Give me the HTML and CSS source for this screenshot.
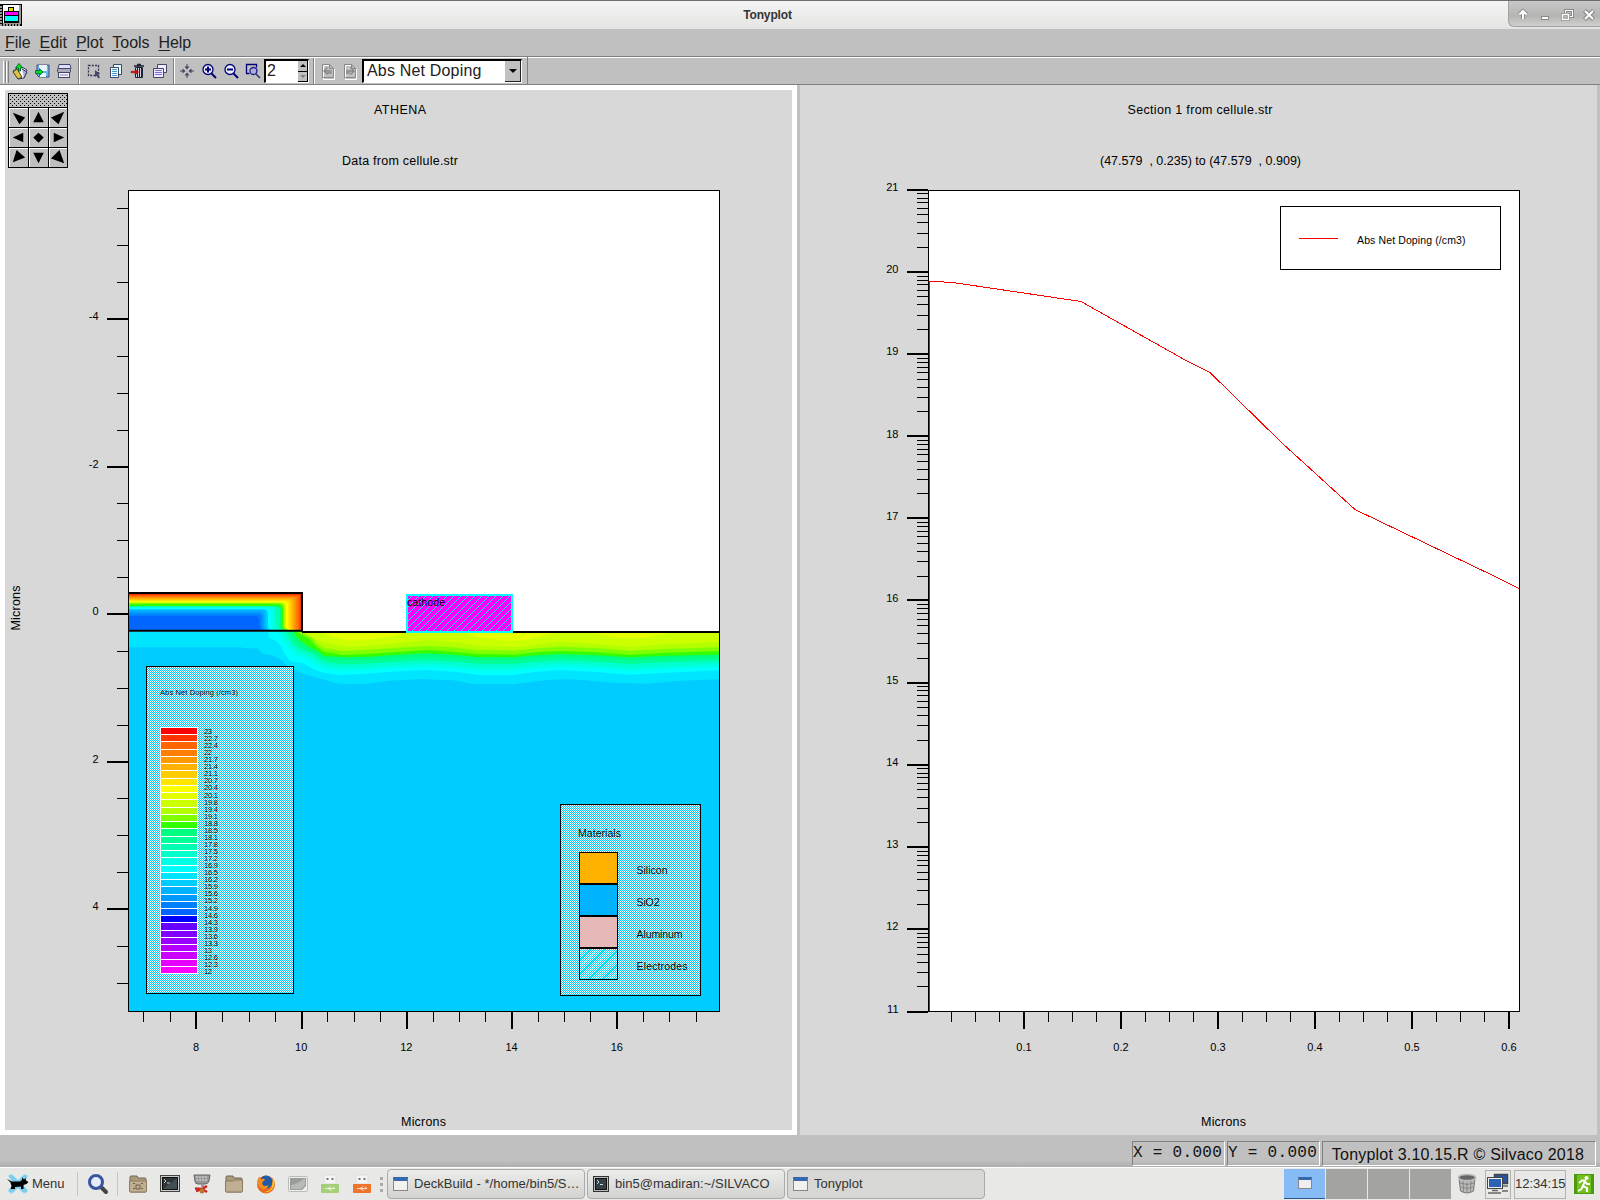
FILE: index.html
```html
<!DOCTYPE html>
<html lang="en">
<head>
<meta charset="utf-8">
<title>Tonyplot</title>
<link rel="stylesheet" href="styles.css">
</head>
<body>
<div class="desktop">
  <header class="titlebar">
    <svg class="app-icon" width="22" height="22" shape-rendering="crispEdges"><rect width="22" height="22" fill="#999"/><path d="M0 .5H21.500V22M2.500 0V20" stroke="#000" fill="none"/><path d="M1 1V21" stroke="#000" stroke-width="2" stroke-dasharray="1 2"/><path d="M2 21H21" stroke="#000" stroke-width="2" stroke-dasharray="1 2"/><rect x="3" y="1" width="16" height="18" fill="#fff"/><rect x="8" y="3" width="6" height="5" fill="#000"/><rect x="9" y="4" width="4" height="4" fill="#dd0"/><rect x="4" y="7" width="15" height="12" fill="#000"/><rect x="5" y="8" width="13" height="3" fill="#f0f"/><rect x="5" y="12" width="13" height="5" fill="#0ff"/></svg>
    <h1 class="window-title">Tonyplot</h1>
    <div class="window-controls">
      <svg width="92" height="26"><g fill="none" stroke="#8b8b8b" stroke-width="4"><path d="M14 19V12M10.500 14.500L14 11L17.500 14.500"/><path d="M75.500 10.500L84.500 19.500M84.500 10.500L75.500 19.500" stroke-width="4.500"/></g><g fill="none" stroke="#fff" stroke-width="2"><path d="M14 19V12M10.500 14.500L14 11L17.500 14.500"/><path d="M76 11L84 19M84 11L76 19"/></g><rect x="32.500" y="16.500" width="7" height="3" fill="#fff" stroke="#888"/><rect x="56.500" y="10.500" width="7" height="6" fill="#bbb" stroke="#888" stroke-width="3"/><rect x="56.500" y="10.500" width="7" height="6" fill="none" stroke="#fff"/><rect x="53.500" y="14.500" width="6" height="5" fill="#bbb" stroke="#888" stroke-width="3"/><rect x="53.500" y="14.500" width="6" height="5" fill="none" stroke="#fff" stroke-width="1.500"/></svg>
    </div>
  </header>

  <nav class="menubar">
    <span><u>F</u>ile</span><span><u>E</u>dit</span><span><u>P</u>lot</span><span><u>T</u>ools</span><span><u>H</u>elp</span>
  </nav>

  <div class="toolbar">
    <i class="grip"></i>
    <div class="tools">
      <svg viewBox="0 0 22 22"><path d="M4 11l7-5 7 4-3 8-6 1z" fill="#fff" stroke="#335"/><path d="M4 12l4-3 5 8-4 2z" fill="#e2c23d" stroke="#443"/><path d="M13 9l5 3-3 6" fill="#aac" stroke="#335"/><path d="M9.500 11V8H6.500L10 3.500 13.500 8H11.500V11z" fill="#0e1" stroke="#063"/></svg>
      <svg viewBox="0 0 22 22"><path d="M6 5h12v12H8l-2-2z" fill="#6cb4ec" stroke="#447"/><path d="M8 5h8v6H8z" fill="#e8f6ff"/><path d="M9 13h6v4H9z" fill="#dff"/><path d="M4.500 10.500h4V8.500l3.500 3.500-3.500 3.500v-2h-4z" fill="#0d2" stroke="#054" stroke-width=".8"/></svg>
      <svg viewBox="0 0 22 22"><path d="M6 4.500h11l1 4H5z" fill="#ddf" stroke="#446"/><rect x="4.500" y="8.500" width="13" height="4" rx="1" fill="#aab" stroke="#446"/><rect x="5.500" y="12.500" width="11" height="5" fill="#eef" stroke="#446"/><path d="M7 15h8" stroke="#88a"/></svg>
    </div>
    <i class="sep"></i>
    <div class="tools">
      <svg viewBox="0 0 22 22"><rect x="5.500" y="5.500" width="10" height="10" fill="none" stroke="#335" stroke-width="1.300" stroke-dasharray="2 1.300"/><path d="M12 10l5 4-2 .5 2 3-1.500 1-2-3-1.500 1.500z" fill="#446"/></svg>
      <svg viewBox="0 0 22 22"><path d="M8.500 4.500h8v10h-8z" fill="#dff" stroke="#446"/><path d="M5.500 7.500h8v10h-8z" fill="#eff" stroke="#446"/><path d="M7 9.500h5M7 11.500h5M7 13.500h5M7 15.500h5" stroke="#49c"/></svg>
      <svg viewBox="0 0 22 22"><path d="M8.500 7.500h7v10h-7z" fill="#ccd" stroke="#223"/><path d="M10.500 8v9M12.500 8v9M14.500 8v9" stroke="#223"/><path d="M7 6h10M10 4.500h4" stroke="#223" stroke-width="1.500"/><path d="M4 11.300h4V9l3.500 3L8 15V12.700H4z" fill="#e00" stroke="#711" stroke-width=".5"/></svg>
      <svg viewBox="0 0 22 22"><path d="M8.500 4.500h9v8h-9z" fill="#eef" stroke="#446"/><path d="M4.500 8.500h10v9h-10z" fill="#eef" stroke="#446"/><path d="M6 10.500h7M6 12.500h7M6 14.500h7" stroke="#86d"/></svg>
    </div>
    <i class="sep tight"></i>
    <div class="tools">
      <svg viewBox="0 0 22 22" fill="#446"><path d="M8.500 6.500L11 9.500 13.500 6.500zM8.500 15.500L11 12.500 13.500 15.500zM6.500 8.500L9.500 11 6.500 13.500zM15.500 8.500L12.500 11 15.500 13.500z"/><path d="M10.500 4h1v4h-1zM10.500 14h1v4h-1zM4 10.500h4v1H4zM14 10.500h4v1h-4z"/></svg>
      <svg viewBox="0 0 22 22"><path d="M13.500 13.500l4.500 4.500" stroke="#007" stroke-width="2"/><circle cx="10" cy="9.500" r="5" fill="#eef" stroke="#007" stroke-width="1.300"/><path d="M7 9.500h6M10 6.500v6" stroke="#007" stroke-width="2"/></svg>
      <svg viewBox="0 0 22 22"><path d="M13.500 13.500l4.500 4.500" stroke="#007" stroke-width="2"/><circle cx="10" cy="9.500" r="5" fill="#eef" stroke="#007" stroke-width="1.300"/><path d="M7 9.500h6" stroke="#007" stroke-width="2"/></svg>
      <svg viewBox="0 0 22 22"><path d="M7.500 13.500h-3v-9h10v3" fill="none" stroke="#007" stroke-width="1.300"/><path d="M14 14l4 4" stroke="#336" stroke-width="1.600"/><circle cx="11.500" cy="11" r="3.500" fill="#aad" stroke="#228" stroke-width="1.300"/></svg>
    </div>
    <div class="spinbox"><span>2</span><div class="spin-buttons"><b></b><b class="down"></b></div></div>
    <i class="sep wide"></i>
    <div class="tools">
      <svg viewBox="0 0 22 22"><path d="M5.500 4.500h7l4 4v10h-11z" stroke="#fff" fill="none" transform="translate(1 1)"/><path d="M5.500 4.500h7l4 4v9h-11zM12.500 4.500v4h4" stroke="#888" fill="none"/><path d="M13 11h-6m3.500-3.500L7 11l3.500 3.500M10 13h4V10" stroke="#888" fill="none" stroke-width="1.300"/></svg>
      <svg viewBox="0 0 22 22"><path d="M5.500 4.500h7l4 4v10h-11z" stroke="#fff" fill="none" transform="translate(1 1)"/><path d="M5.500 4.500h7l4 4v9h-11zM12.500 4.500v4h4" stroke="#888" fill="none"/><path d="M7 11h8m-3.500-3.500L15 11l-3.500 3.500M7 13h4" stroke="#888" fill="none" stroke-width="1.300"/></svg>
    </div>
    <div class="combo"><span>Abs Net Doping</span><b></b></div>
    <i class="toolbar-end"></i>
  </div>

  <main class="panes">
    <section class="pane active">
      <svg class="plot" id="structure" viewBox="5 90 787 1040" width="787" height="1040">
        <defs>
          <pattern id="dither" width="2" height="2" patternUnits="userSpaceOnUse"><rect x="1" width="1" height="1" fill="#fff"/><rect y="1" width="1" height="1" fill="#fff"/></pattern>
          <pattern id="hatch" width="7" height="7" patternUnits="userSpaceOnUse"><path d="M-1 8L8 -1M-1 1L1 -1M6 8L8 6" stroke="#0ff" stroke-width="1"/></pattern>
          <clipPath id="below"><path d="M147 214H666V217H2000V1400H147Z"/></clipPath>
        </defs>
        <text x="400" y="113.500" textLength="52" class="title">ATHENA</text>
        <text x="400" y="165" textLength="116" class="title">Data from cellule.str</text>
        <rect x="129" y="191" width="590" height="820" fill="#fff"/>
        <rect x="129" y="632" width="590" height="379" fill="#0cf"/>
        <g transform="translate(80 560) scale(.33333)">
          <g clip-path="url(#below)" id="diffusion">
            <path fill="#00e5ff" d="M147 200V262H480L500 265H532L545 280L575 286L600 296L620 316L642 330L680 345L725 357L770 370L800 373L860 371L930 362L1020 357L1120 361L1180 372L1300 373L1380 362L1440 358L1500 359L1600 368L1700 371L1800 362L1917 358V200Z"/>
            <path fill="#0ff" d="M566 200V232L590 244L604 260L612 280L630 303L670 310L700 328L725 337L775 345L850 342L950 334L1040 330L1130 336L1200 345L1300 345L1370 335L1440 330L1550 336L1650 344L1760 338L1917 331V200Z"/>
            <path fill="#00ffe5" d="M585 200L605 235L622 262L645 285L680 298L710 315L740 327L790 333L850 331L950 324L1040 320L1130 325L1200 333L1300 333L1370 325L1440 320L1550 325L1650 333L1760 327L1917 321V200Z"/>
            <path fill="#00ffcc" d="M600 200L618 235L636 260L655 275L690 290L720 310L745 318L790 323L850 321L950 315L1040 311L1130 316L1200 323L1300 323L1370 315L1440 311L1550 315L1650 323L1760 318L1917 312V200Z"/>
            <path fill="#00ff99" d="M612 200L628 235L644 255L665 270L700 284L725 301L750 309L790 313L850 311L950 305L1040 301L1130 305L1200 312L1300 312L1370 305L1440 301L1550 305L1650 312L1760 307L1917 302V200Z"/>
            <path fill="#00ff80" d="M622 200L638 230L652 250L672 265L705 280L728 294L755 301L850 300L950 295L1040 291L1130 295L1200 301L1300 301L1370 294L1440 291L1550 295L1650 301L1760 297L1917 293V200Z"/>
            <path fill="#3f0" d="M634 200L648 228L662 242L690 262L712 272L732 288L800 292L870 290L930 286L1040 280L1120 284L1190 291L1300 292L1370 286L1440 282L1550 286L1650 292L1760 287L1917 284V200Z"/>
            <path fill="#80ff00" d="M645 200L660 222L690 238L705 255L730 275L790 285L850 283L940 277L1040 270L1120 275L1190 282L1300 284L1370 277L1440 273L1550 277L1650 284L1760 278L1917 274V200Z"/>
            <path fill="#b3ff00" d="M652 200L668 220L695 232L712 252L735 265L790 273L850 270L940 264L1040 258L1120 262L1190 270L1300 272L1370 265L1440 260L1550 264L1650 272L1760 266L1917 262V200Z"/>
            <path fill="#cf0" d="M680 200V222L710 240L750 252L800 261L860 258L950 250L1050 240L1120 247L1200 258L1320 261L1380 253L1440 246L1550 253L1650 261L1760 252L1917 247V200Z"/>
            <path fill="#e5ff00" d="M715 217L760 231L800 242L860 240L930 230L980 217ZM1150 217L1200 233L1290 243L1340 240L1390 227L1430 217ZM1520 217L1620 234L1690 234L1780 217Z"/>
          </g>
          <g id="oxide"></g>
          <path d="M147 99H666V216M147 212H666M666 216H1917" fill="none" stroke="#000" stroke-width="6"/>
          <path d="M981 105H1296V215H981Z" fill="#f0f"/>
        </g>
        <rect x="407" y="595" width="105" height="37" fill="url(#hatch)"/>
        <rect x="407" y="595" width="105" height="37" fill="none" stroke="#0ff" stroke-width="2" shape-rendering="crispEdges"/>
        <text x="407" y="606" textLength="38" class="small">cathode</text>
        <rect x="128.500" y="190.500" width="591" height="821" class="frame"/>

        <g id="doping-legend">
          <rect x="146.500" y="666.500" width="147" height="327" fill="url(#dither)" class="frame-line"/>
          <text x="160" y="695" textLength="78" class="tiny">Abs Net Doping (/cm3)</text>
        </g>
        <g class="materials">
          <rect x="560.500" y="804.500" width="140" height="191" fill="url(#dither)" class="frame-line"/>
          <text x="578" y="837" textLength="43" class="small">Materials</text>
          <g stroke="#000" shape-rendering="crispEdges">
            <rect x="579.500" y="852.500" width="38" height="31" fill="#ffb300"/>
            <rect x="579.500" y="884.500" width="38" height="31" fill="#00b3ff"/>
            <rect x="579.500" y="916.500" width="38" height="31" fill="#e6b8b8"/>
            <rect x="579.500" y="948.500" width="38" height="31" fill="url(#hatch)"/>
          </g>
          <text x="636.500" y="874" textLength="31" class="small">Silicon</text>
          <text x="636.500" y="906" textLength="23" class="small">SiO2</text>
          <text x="636.500" y="938" textLength="46" class="small">Aluminum</text>
          <text x="636.500" y="970" textLength="51" class="small">Electrodes</text>
        </g>
        <text transform="translate(19.500 608) rotate(-90)" textLength="45" class="title">Microns</text>
        <text x="423.500" y="1126" textLength="45" class="title">Microns</text>
      </svg>
      <div class="navpad">
        <svg class="navpad-grip" width="58" height="14" shape-rendering="crispEdges"><defs><pattern id="dots" width="4" height="4" patternUnits="userSpaceOnUse"><rect x="1" y="1" width="1" height="1"/><rect x="3" y="3" width="1" height="1"/></pattern></defs><rect width="58" height="13" fill="url(#dots)"/></svg>
        <div class="navpad-keys">
          <svg viewBox="0 0 20 20"><path d="M4 5L17 10 11 17z"/></svg><svg viewBox="0 0 20 20"><path d="M10 4L15.500 15H4.500z"/></svg><svg viewBox="0 0 20 20"><path d="M16 4L2 10 10 17z"/></svg>
          <svg viewBox="0 0 20 20"><path d="M4 10L15 5V15z"/></svg><svg viewBox="0 0 20 20"><path d="M10 5L15.500 10 10 15.500 4.500 10z"/></svg><svg viewBox="0 0 20 20"><path d="M16 10L5 5V15z"/></svg>
          <svg viewBox="0 0 20 20"><path d="M8 2L17 10 4 15z"/></svg><svg viewBox="0 0 20 20"><path d="M10 16L15.500 5H4.500z"/></svg><svg viewBox="0 0 20 20"><path d="M16 16L11 2 2 11z"/></svg>
        </div>
      </div>
    </section>

    <section class="pane">
      <svg class="plot" id="section" viewBox="800 85 797 1050" width="797" height="1050">
        <text x="1200" y="113.500" textLength="145" class="title">Section 1 from cellule.str</text>
        <text x="1200.500" y="165" textLength="201" class="title" xml:space="preserve">(47.579  , 0.235) to (47.579  , 0.909)</text>
        <rect x="928.500" y="190.500" width="591" height="821" fill="#fff" class="frame-line"/>
        <path d="M929.500 1011V281.500H936L952 282.500 963 284 1081 301.500 1186 360.500 1210 372.500 1282 443 1355 509.500 1495 576.500 1519 588.500" fill="none" stroke="#f00" shape-rendering="crispEdges"/>
        <rect x="1280.500" y="206.500" width="220" height="63" fill="#fff" class="frame-line"/>
        <path d="M1299 238.500H1338" stroke="#f00"/>
        <text x="1357" y="244" textLength="108.500" class="small">Abs Net Doping (/cm3)</text>
        <text x="1223.500" y="1126" textLength="45" class="title">Microns</text>
      </svg>
    </section>
  </main>

  <footer class="statusbar">
    <div class="readout">X = 0.000</div>
    <div class="readout">Y = 0.000</div>
    <div class="version"><span>Tonyplot 3.10.15.R © Silvaco 2018</span></div>
  </footer>

  <div class="taskbar">
    <div class="menu-button">
      <svg width="22" height="22"><path d="M1 3Q3 0 6 2L11 7 16 2Q20 0 21 4L15 11 21 17Q20 21 16 20L11 15 6 20Q2 21 1 17L7 11Z" fill="#7ccdec" stroke="#bfe6f6"/><path d="M0 6L5 8.500H13L15 7V4.500L17 6.500 18.500 5 19 7.500 21.500 9 19.500 11 16.500 12V16H14V13.500L8 14V16H3.500L4.500 13 3.500 9.500z" fill="#000"/></svg>
      <span>Menu</span>
    </div>
    <i class="bar-sep"></i>
    <svg class="search" width="22" height="22"><path d="M13 13L19 19" stroke="#444" stroke-width="4" stroke-linecap="round"/><circle cx="9" cy="9" r="6.500" fill="#e4ecf8" stroke="#3a559f" stroke-width="3"/></svg>
    <i class="bar-sep"></i>
    <div class="launchers">
      <svg viewBox="0 0 20 20"><path d="M2 3q0-1 1-1h6l1 2h7q1 0 1 1v12q0 1-1 1H3q-1 0-1-1z" fill="#ab9a7c" stroke="#77684e"/><path d="M1.500 7h17v10q0 1-1 1h-15q-1 0-1-1z" fill="#bfae91" stroke="#8b7b60"/><path d="M5 9.500h2M13 9.500h2M8 11h4v4H8zM5 14.500h2M13 14.500h2" stroke="#6c5e48" fill="none"/></svg>
      <svg viewBox="0 0 20 20"><rect x=".5" y="1.500" width="19" height="16" fill="#ccc" stroke="#444"/><rect x="2.500" y="3.500" width="15" height="12" fill="#2c3538" stroke="#111"/><path d="M4 5l2 2-2 2M7 9h3" stroke="#bcc" fill="none"/><path d="M3 15L17 4V15z" fill="#526064" opacity=".6"/></svg>
      <svg viewBox="0 0 20 20"><path d="M2 1h16l-1 6q-1 3-4 3H6Q3 10 3 7z" fill="#999" stroke="#666"/><path d="M4 3h12M4 6h12" stroke="#ddd" stroke-dasharray="2 1"/><path d="M9 10h3v3H9z" fill="#999"/><path d="M3 14.500l7 .5 5-3M4 17l6-2 5 3" stroke="#c22" stroke-width="2.500" fill="none"/><circle cx="10" cy="17" r="2.500" fill="#b87a2c"/></svg>
      <svg viewBox="0 0 20 20"><path d="M2 3q0-1 1-1h6l1 2h7q1 0 1 1v12q0 1-1 1H3q-1 0-1-1z" fill="#ab9a7c" stroke="#77684e"/><path d="M1.500 7h8l1-1h8v11q0 1-1 1h-15q-1 0-1-1z" fill="#bfae91" stroke="#8b7b60"/></svg>
      <svg viewBox="0 0 20 20"><circle cx="10" cy="10.500" r="9" fill="#e8661b"/><circle cx="10" cy="8" r="6.500" fill="#225ba5"/><path d="M1 7q1-3 2.500-4.500L5 5q3-1 4 1L6.500 8q-1 3 2 4 2 0 4-1-1 4-5 4.500Q2 14 1 7z" fill="#f28b20"/><path d="M17 4q3 5 0 10-3 5-9 4 7-1 8-6z" fill="#fbc02d"/></svg>
      <svg viewBox="0 0 20 20"><rect x=".5" y="2.500" width="19" height="15" rx="1" fill="#eee" stroke="#bbb"/><path d="M2 4h16v8l-4 4H2z" fill="#999d97"/><path d="M3 11Q10 10 17 4V11L13 15H3z" fill="#b8bbb5"/></svg>
      <svg viewBox="0 0 20 20"><path d="M4 1h12v9H4z" fill="#f4f4f4" stroke="#ddd"/><path d="M6.500 4h2v2h-2zM11.500 4h2v2h-2z" fill="#777"/><path d="M1 10h18v8q0 1-1 1H2q-1 0-1-1z" fill="#a5cf78"/><path d="M5 14.500h10l-2-1.500M8 14.500l3-2M8 14.500l4 2" stroke="#fff" stroke-opacity=".7" fill="none"/></svg>
      <svg viewBox="0 0 20 20"><path d="M4 1h12v9H4z" fill="#f4f4f4" stroke="#ddd"/><path d="M6.500 4h2v2h-2zM11.500 4h2v2h-2z" fill="#777"/><path d="M1 10h18v8q0 1-1 1H2q-1 0-1-1z" fill="#ee742c"/><path d="M5 14.500h10l-2-1.500M8 14.500l3-2M8 14.500l4 2" stroke="#fff" stroke-opacity=".7" fill="none"/></svg>
    </div>
    <div class="bar-dots"><i></i><i></i><i></i></div>
    <div class="tasks">
      <div class="task"><i class="win-icon"></i><span>DeckBuild - */home/bin5/S…</span></div>
      <div class="task"><svg width="16" height="16"><rect x=".5" y=".5" width="15" height="15" fill="#bbb" stroke="#333"/><rect x="2.500" y="2.500" width="11" height="11" fill="#354044" stroke="#111"/><path d="M4 4l2 2-2 2M7 8.500h3" stroke="#cdd" fill="none"/></svg><span>bin5@madiran:~/SILVACO</span></div>
      <div class="task current"><i class="win-icon"></i><span>Tonyplot</span></div>
    </div>
    <div class="pager"><i class="on"><b></b></i><i></i><i></i><i></i></div>
    <div class="tray">
      <svg class="trash" width="20" height="22"><path d="M2 5L3.500 18Q10 22 16.500 18L18 5z" fill="#b9bbb8" stroke="#777"/><path d="M6 8l.5 11M10 9v11M14 8l-.5 11M3 10Q10 13 17 10M3.500 14Q10 17 16.500 14" stroke="#888" fill="none"/><ellipse cx="10" cy="4.500" rx="8.500" ry="3" fill="#666" stroke="#bbb" stroke-width="1.500"/></svg>
      <div class="tray-box net"><svg width="22" height="22"><rect x="7.500" y="1.500" width="13" height="9" fill="#2456a4" stroke="#444" stroke-width="1.500"/><path d="M12 13h9" stroke="#888" stroke-width="2"/><rect x="1.500" y="5.500" width="13" height="9" fill="#2c62b4" stroke="#eee"/><rect x=".5" y="4.500" width="15" height="11" fill="none" stroke="#444"/><path d="M5 17.500h6M1 20h13M15 18h6" stroke="#666" stroke-width="1.500"/></svg></div>
      <div class="tray-box clock">12:34:15</div>
      <svg class="exit" width="20" height="20"><rect width="20" height="20" fill="#4c9a0c"/><path d="M3 1h14v18H3z" fill="#73c01f"/><circle cx="12.500" cy="4" r="2" fill="#fff"/><path d="M5 9L8 6.500H11L9 12 13 14V18M9 11.500L7.500 15 4 17M11 7.500L13 10H16" fill="none" stroke="#fff" stroke-width="2"/></svg>
    </div>
  </div>
</div>
<script src="plots.js"></script>
</body>
</html>
```
FILE: styles.css
```css
* { box-sizing: border-box; }
body { margin: 0; background: #c0c0c0; font-family: "Liberation Sans", Arial, sans-serif; color: #000; }
.desktop { width: 1600px; height: 1200px; display: flex; flex-direction: column; overflow: hidden; }
svg { display: block; flex: none; }

.titlebar { height: 29px; display: grid; grid-template-columns: 92px 1fr 92px; border-top: 1px solid #6e6e6e; background: linear-gradient(#f4f4f4, #e4e4e2); }
.app-icon { margin-top: 3px; }
.window-title { margin: 0; font-size: 12px; line-height: 28px; letter-spacing: -.15px; text-align: center; padding-right: 65px; color: #333; }
.window-controls { height: 26px; border: solid #a2a2a2; border-width: 0 0 1px 1px; border-radius: 0 0 0 6px; background: linear-gradient(#c8c8c8, #b4b4b2 60%, #d0d0ce); overflow: hidden; }
.window-controls svg { margin-top: -1px; }

.menubar { height: 27px; display: flex; gap: 9px; padding: 4px 0 0 5px; font-size: 16px; line-height: 19px; letter-spacing: -.05px; color: #222; }
.menubar u { text-underline-offset: 2px; text-decoration-thickness: 1px; }

.toolbar { height: 29px; display: flex; align-items: center; border-top: 1px solid #808080; border-bottom: 1px solid #808080; box-shadow: inset 0 1px #fff; }
.grip { width: 6px; height: 22px; margin: 2px 0 0 3px; border-left: 1px solid #fff; border-right: 1px solid #808080; background: linear-gradient(90deg, #c0c0c0 1px, #808080 1px 2px, #fff 2px 3px, #c0c0c0 3px); }
.tools { display: flex; }
.tools svg { width: 22px; height: 22px; }
.sep { width: 2px; height: 26px; margin: 1px 3px; border-left: 1px solid #808080; border-right: 1px solid #fff; }
.sep.tight { margin: 1px 1px 1px 2px; }
.sep.wide { margin: 1px 2px 1px 4px; }
.spinbox, .combo { height: 24px; display: flex; background: #fff; border: 1px solid #fff; border-top: 2px solid #000; border-left: 2px solid #000; font-size: 16px; line-height: 20px; color: #222; margin-top: 1px; }
.spinbox { width: 45px; padding-left: 1px; justify-content: space-between; }
.spin-buttons { width: 10px; display: flex; flex-direction: column; background: #c0c0c0; border-right: 1px solid #000; }
.spin-buttons b { height: 11px; border-bottom: 1px solid #000; display: grid; place-items: center; }
.spin-buttons b::before { content: ""; border: 3px solid transparent; border-top: 0; border-bottom: 3px solid #000; }
.spin-buttons .down::before { border-top: 3px solid #808080; border-bottom: 0; }
.combo { width: 160px; padding-left: 3px; margin-left: 1px; justify-content: space-between; letter-spacing: .18px; }
.combo b { width: 16px; background: #c0c0c0; border: solid; border-width: 0 1px 1px 0; display: grid; place-items: center; }
.combo b::before { content: ""; border: 4px solid transparent; border-top-color: #000; border-bottom: 0; }
.toolbar-end { width: 1px; height: 27px; margin-left: 5px; background: #808080; }

.panes { height: 1050px; display: flex; gap: 3px; padding-right: 3px; }
.pane { position: relative; width: 797px; background: #d8d8d8; }
.pane.active { border: 5px solid #fff; }
.plot text { font-family: "Liberation Sans", Arial, sans-serif; }
.title { font-size: 12.500px; text-anchor: middle; }
.small { font-size: 10.500px; }
.tick-x { font-size: 11px; text-anchor: middle; }
.tick-y { font-size: 11px; text-anchor: end; }
.tiny { font-size: 7.500px; }
.frame { fill: none; stroke: #000; shape-rendering: crispEdges; }
.frame-line { stroke: #000; shape-rendering: crispEdges; }
.tick-line { stroke: #000; fill: none; shape-rendering: crispEdges; }
.tick-line.major { stroke-width: 2px; }
#dither rect { shape-rendering: crispEdges; }

.navpad { position: absolute; left: 3px; top: 3px; width: 60px; border: 1px solid #000; background: #c0c0c0; }
.navpad-grip { border-bottom: 1px solid #000; }
.navpad-keys { display: grid; grid-template-columns: 20px 20px 18px; grid-auto-rows: 20px; height: 59px; overflow: hidden; }
.navpad-keys svg { width: 20px; height: 20px; border: solid #000; border-width: 0 1px 1px 0; box-shadow: inset 1px 1px #fff; }

.statusbar { height: 32px; display: flex; align-items: flex-start; justify-content: flex-end; gap: 2px; padding: 6px 4px 0 0; background: linear-gradient(#c0c0c0 80%, #adadad); color: #111; }
.statusbar div { height: 25px; border: 1px solid #fff; border-top-color: #808080; border-left-color: #808080; line-height: 23px; white-space: pre; }
.readout { width: 93px; font: 16px/23px "Liberation Mono", monospace; letter-spacing: .3px; }
.version { width: 274px; font-size: 16px; text-align: center; }
.version span { position: relative; top: 1px; left: -1px; letter-spacing: .2px; }

.taskbar { height: 33px; display: flex; border-top: 1px solid #fff; background: #e8e8e6; font-size: 13px; color: #333; align-items: center; }
.menu-button { width: 77px; display: flex; align-items: center; gap: 3px; padding-left: 7px; }
.menu-button span { margin-top: -2px; }
.bar-sep { width: 1px; height: 24px; background: #c6c6c4; }
.search { margin: 0 8px 0 9px; }
.launchers { display: flex; gap: 12px; margin-left: 10px; }
.launchers svg { width: 20px; height: 20px; }
.bar-dots { width: 15px; display: flex; flex-direction: column; align-items: center; gap: 3px; padding-left: 4px; }
.bar-dots i { width: 3px; height: 3px; background: #aaa; }
.tasks { display: flex; gap: 2px; }
.task { width: 198px; height: 30px; display: flex; align-items: center; gap: 6px; padding-left: 5px; border: 1px solid #aaa; border-radius: 4px; background: linear-gradient(#ececea, #d2d2d0); white-space: nowrap; }
.task.current { background: #d7d7d5; }
.task span { margin-top: -1px; letter-spacing: .03px; }
.win-icon { width: 15px; height: 14px; border: 1px solid #888; border-top: 4px solid #3668ac; background: #f1f1ee; }
.pager { margin-left: auto; height: 30px; display: flex; gap: 1px; }
.pager i { width: 41px; background: #a3a49f; display: grid; place-items: center; }
.pager .on { background: #86bbf5; border-bottom: 1px solid #26588f; }
.pager b { width: 14px; height: 12px; border: 1px solid #888; border-top: 3px solid #3668ac; background: #eee; margin-top: -2px; }
.tray { display: flex; align-items: center; width: 149px; padding-left: 6px; }
.tray-box { height: 29px; border: 1px solid #b2b2b0; display: grid; place-items: center; }
.net { width: 26px; margin-left: 8px; }
.clock { width: 52px; margin-left: 3px; padding-bottom: 2px; }
.exit { margin-left: 8px; }
```
FILE: plots.js
```js
const NS = "http://www.w3.org/2000/svg";
function add(parent, tag, attrs, text) {
  const el = document.createElementNS(NS, tag);
  for (const k in attrs) el.setAttribute(k, attrs[k]);
  if (text !== undefined) el.textContent = text;
  parent.appendChild(el);
  return el;
}
const half = v => Math.floor(v) + 0.5;

function tickY(svg, axis, y, major) {
  if (major) add(svg, "path", { class: "tick-line major", d: `M${axis - 21} ${Math.round(y)}H${axis}` });
  else add(svg, "path", { class: "tick-line", d: `M${axis - 11} ${half(y)}H${axis}` });
}
function tickX(svg, x, major) {
  if (major) add(svg, "path", { class: "tick-line major", d: `M${Math.round(x)} 1012V1029` });
  else add(svg, "path", { class: "tick-line", d: `M${half(x)} 1012V1022` });
}

const structure = document.getElementById("structure");
for (let i = -11; i <= 10; i++) {
  const y = 614.4 + i * 36.88;
  tickY(structure, 128, y, i % 4 === 0);
  if (i % 4 === 0) add(structure, "text", { x: 98.5, y: Math.round(y + 1), class: "tick-y" }, i / 2);
}
for (let i = -2; i <= 19; i++) {
  const x = 196.45 + i * 26.3;
  tickX(structure, x, i % 4 === 0);
  if (i % 4 === 0) add(structure, "text", { x: x - 0.5, y: 1051, class: "tick-x" }, 8 + i / 2);
}

const section = document.getElementById("section");
for (let n = 11; n <= 21; n++) {
  const y = 1011.6 - (n - 11) * 82.15;
  tickY(section, 928, n === 11 ? 1012 : Math.floor(y), true);
  add(section, "text", { x: 898.5, y: y + 1, class: "tick-y" }, n);
  if (n < 21) for (let k = 2; k <= 9; k++) tickY(section, 928, y - Math.log10(k) * 82.15, false);
}
for (let i = 1; i <= 24; i++) {
  const x = 927 + i * 24.25;
  tickX(section, x, i % 4 === 0);
  if (i % 4 === 0) add(section, "text", { x, y: 1051, class: "tick-x" }, (i / 40).toFixed(1));
}

// nested dopant contours inside the oxide step: [colour, top, right edge]
const oxide = document.getElementById("oxide");
[["#ff3300", 102, 664], ["#ff6600", 106, 659], ["#ff8000", 109, 653], ["#ff9900", 112, 647],
 ["#ffb300", 115, 641], ["#ffcc00", 118, 635], ["#ffe500", 121, 630], ["#ffff00", 124, 624],
 ["#ccff00", 126, 618], ["#80ff00", 129, 613], ["#33ff00", 132, 609], ["#00ff80", 138, 605],
 ["#00ffb3", 139, 600], ["#00ffe5", 141, 586], ["#00ffff", 144, 573], ["#00ccff", 147, 564],
 ["#00b3ff", 150, 557], ["#0099ff", 155, 551], ["#0080ff", 161, 545], ["#0066ff", 168, 538]
].forEach(([fill, top, right]) => {
  const r = Math.min(14, (666 - right) / 3);
  add(oxide, "path", { fill, d: `M147 ${top}H${right - r}Q${right} ${top} ${right} ${top + r}V198Q${right} 209 ${right + r} 209H147Z` });
});

const legend = document.getElementById("doping-legend");
const colours = ("f00 f30 f60 ff8000 ff9900 ffb300 ffcc00 ffe500 ffff00 e5ff00 ccff00 b3ff00 80ff00 33ff00 00ff80 " +
  "00ff99 00ffb3 00ffcc 00ffe5 00ffff 00e5ff 00ccff 00b3ff 0099ff 0080ff 0066ff 0000ff 6600ff 8000ff 9900ff " +
  "b300ff cc00ff e500ff ff00ff").split(" ");
add(legend, "rect", { x: 160, y: 727, width: 38, height: 247, fill: "#fff" });
colours.forEach((c, i) => {
  const y0 = Math.round(728 + i * 7.24), y1 = Math.round(728 + (i + 1) * 7.24) - 1;
  add(legend, "rect", { x: 161, y: y0, width: 36, height: y1 - y0, fill: "#" + c });
});
("23 22.7 22.4 22 21.7 21.4 21.1 20.7 20.4 20.1 19.8 19.4 19.1 18.8 18.5 18.1 17.8 17.5 17.2 16.9 16.5 16.2 " +
  "15.9 15.6 15.2 14.9 14.6 14.3 13.9 13.6 13.3 13 12.6 12.3 12").split(" ").forEach((t, i) => {
  add(legend, "text", { x: 204, y: 734 + i * 7.06, class: "tiny", textLength: t.length > 2 ? 14 : 8 }, t);
});
```
